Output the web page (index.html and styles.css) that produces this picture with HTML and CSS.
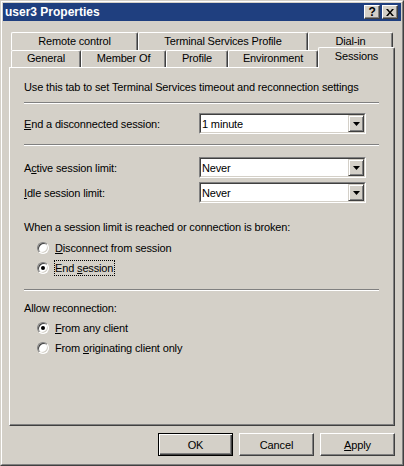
FILE: index.html
```html
<!DOCTYPE html>
<html lang="en">

<head>
    <meta charset="UTF-8">
    <meta name="viewport" content="width=device-width, initial-scale=1.0">
    <title>user3 Properties</title>
    <link rel="stylesheet" href="styles.css">
</head>

<body>
    <div class="window">
        <div class="frame">
            <div class="caption">
                <span class="caption-title">user3 Properties</span>
                <div class="caption-buttons">
                    <span class="caption-btn help">?</span>
                    <span class="caption-btn">
                        <svg width="8" height="7" viewBox="0 0 8 7"><path d="M0 0h2l2 2.4L6 0h2L5 3.5 8 7H6L4 4.6 2 7H0l3-3.5z" fill="#000"/></svg>
                    </span>
                </div>
            </div>

            <div class="content">
                <div class="tabs">
                    <div class="tab-row tab-row-back">
                        <div class="tab tab-remote">Remote control</div>
                        <div class="tab tab-tsprofile">Terminal Services Profile</div>
                        <div class="tab tab-dialin">Dial-in</div>
                    </div>
                    <div class="tab-row tab-row-front">
                        <div class="tab tab-general">General</div>
                        <div class="tab tab-member">Member Of</div>
                        <div class="tab tab-profile">Profile</div>
                        <div class="tab tab-env">Environment</div>
                        <div class="tab tab-sessions selected">Sessions</div>
                    </div>
                </div>

                <div class="panel">
                    <div class="intro">Use this tab to set Terminal Services timeout and reconnection settings</div>
                    <div class="sep sep-1"></div>

                    <div class="field-row row-end">
                        <span class="field-label"><u>E</u>nd a disconnected session:</span>
                        <div class="combo">
                            <div class="combo-inner">
                                <span class="combo-value">1 minute</span>
                                <span class="combo-btn"><svg width="7" height="4" viewBox="0 0 7 4"><path d="M0 0h7L3.5 4z" fill="#000"/></svg></span>
                            </div>
                        </div>
                    </div>

                    <div class="sep sep-2"></div>

                    <div class="field-row row-active">
                        <span class="field-label">A<u>c</u>tive session limit:</span>
                        <div class="combo">
                            <div class="combo-inner">
                                <span class="combo-value">Never</span>
                                <span class="combo-btn"><svg width="7" height="4" viewBox="0 0 7 4"><path d="M0 0h7L3.5 4z" fill="#000"/></svg></span>
                            </div>
                        </div>
                    </div>
                    <div class="field-row row-idle">
                        <span class="field-label"><u>I</u>dle session limit:</span>
                        <div class="combo">
                            <div class="combo-inner">
                                <span class="combo-value">Never</span>
                                <span class="combo-btn"><svg width="7" height="4" viewBox="0 0 7 4"><path d="M0 0h7L3.5 4z" fill="#000"/></svg></span>
                            </div>
                        </div>
                    </div>

                    <div class="group-label group-limit">When a session limit is reached or connection is broken:</div>
                    <div class="radio-group group-limit-options">
                        <div class="radio-row">
                            <span class="radio"></span>
                            <span class="radio-label"><u>D</u>isconnect from session</span>
                        </div>
                        <div class="radio-row">
                            <span class="radio checked"></span>
                            <span class="radio-label focused">End <u>s</u>ession</span>
                        </div>
                    </div>

                    <div class="sep sep-3"></div>

                    <div class="group-label group-reconnect">Allow reconnection:</div>
                    <div class="radio-group group-reconnect-options">
                        <div class="radio-row">
                            <span class="radio checked"></span>
                            <span class="radio-label"><u>F</u>rom any client</span>
                        </div>
                        <div class="radio-row">
                            <span class="radio"></span>
                            <span class="radio-label">From <u>o</u>riginating client only</span>
                        </div>
                    </div>
                </div>

                <div class="actions">
                    <button class="btn btn-default">OK</button>
                    <button class="btn">Cancel</button>
                    <button class="btn"><u>A</u>pply</button>
                </div>
            </div>
        </div>
    </div>
</body>

</html>
```

FILE: styles.css
```css
body {
    margin: 0;
    font-family: "Liberation Sans", Arial, sans-serif;
    font-size: 11px;
    letter-spacing: -0.15px;
    color: #000;
    background-color: #d4d0c8;
}

.window {
    width: 404px;
    height: 466px;
    box-sizing: border-box;
    border: 1px solid;
    border-color: #d4d0c8 #404040 #404040 #d4d0c8;
    background-color: #d4d0c8;
}

.frame {
    height: 100%;
    box-sizing: border-box;
    border: 1px solid;
    border-color: #fff #808080 #808080 #fff;
    padding: 1px;
}

/* title bar */
.caption {
    height: 18px;
    background-color: #1f3f7f;
    color: #fff;
    display: flex;
    align-items: center;
    padding: 0 3px 0 2px;
}

.caption-title {
    font-weight: bold;
    font-size: 12px;
    letter-spacing: 0;
}

.caption-buttons {
    margin-left: auto;
    display: flex;
    gap: 2px;
}

.caption-btn {
    width: 16px;
    height: 14px;
    box-sizing: border-box;
    border: 1px solid;
    border-color: #fff #404040 #404040 #fff;
    box-shadow: inset -1px -1px #808080;
    background-color: #d4d0c8;
    display: flex;
    align-items: center;
    justify-content: center;
    color: #000;
}

.caption-btn.help {
    font-weight: bold;
    font-size: 12px;
    line-height: 12px;
}

.content {
    padding: 11px 6px 0;
}

/* tabs */
.tabs {
    padding-left: 2px;
}

.tab-row {
    display: flex;
}

.tab {
    box-sizing: border-box;
    border: 1px solid;
    border-bottom: none;
    border-color: #fff #404040 #fff #fff;
    box-shadow: inset -1px 0 #808080;
    border-radius: 2px 2px 0 0;
    background-color: #d4d0c8;
    text-align: center;
    white-space: nowrap;
}

.tab-row-back .tab {
    height: 18px;
    line-height: 16px;
}

.tab-row-front .tab {
    height: 17px;
    line-height: 15px;
}

.tab-row-front .tab.selected {
    position: relative;
    z-index: 2;
    height: 21px;
    margin-top: -3px;
    margin-bottom: -1px;
    line-height: 17px;
}

.tab-remote { width: 127px; }
.tab-tsprofile { width: 170px; }
.tab-dialin { width: 85px; }
.tab-general { width: 70px; }
.tab-member { width: 85px; }
.tab-profile { width: 62px; }
.tab-env { width: 90px; }
.tab-sessions { width: 77px; }

/* property page */
.panel {
    height: 359px;
    box-sizing: border-box;
    border: 1px solid;
    border-color: #fff #404040 #404040 #fff;
    box-shadow: inset -1px -1px #808080;
    padding: 13px 15px 0 14px;
}

.intro {
    line-height: 13px;
}

.sep {
    height: 0;
    border-top: 1px solid #808080;
    border-bottom: 1px solid #fff;
}

.sep-1 { margin-top: 8px; }
.sep-2 { margin-top: 10px; }
.sep-3 { margin-top: 11px; }

.field-row {
    display: flex;
    align-items: center;
    height: 21px;
}

.row-end { margin-top: 9px; }
.row-active { margin-top: 11px; }
.row-idle { margin-top: 4px; }

.field-label {
    width: 175px;
}

.combo {
    width: 167px;
    height: 21px;
    box-sizing: border-box;
    border: 1px solid;
    border-color: #808080 #fff #fff #808080;
}

.combo-inner {
    height: 100%;
    box-sizing: border-box;
    border: 1px solid;
    border-color: #404040 #d4d0c8 #d4d0c8 #404040;
    background-color: #fff;
    display: flex;
    align-items: center;
}

.combo-value {
    flex: 1;
    padding-left: 1px;
}

.combo-btn {
    width: 16px;
    height: 17px;
    box-sizing: border-box;
    border: 1px solid;
    border-color: #d4d0c8 #404040 #404040 #d4d0c8;
    box-shadow: inset 1px 1px #fff, inset -1px -1px #808080;
    background-color: #d4d0c8;
    display: flex;
    align-items: center;
    justify-content: center;
}

.group-label {
    line-height: 13px;
}

.group-limit { margin-top: 18px; }
.group-reconnect { margin-top: 11px; }
.group-limit-options { margin-top: 4px; }
.group-reconnect-options { margin-top: 3px; }

.radio-row {
    display: flex;
    align-items: center;
    height: 20px;
    padding-left: 13px;
}

.radio {
    position: relative;
    width: 12px;
    height: 12px;
    box-sizing: border-box;
    border-radius: 50%;
    border: 1px solid;
    border-color: #808080 #fff #fff #808080;
    background-color: #fff;
    box-shadow: inset 1px 1px #404040, inset -1px -1px #d4d0c8;
    margin-right: 5px;
}

.radio.checked::after {
    content: "";
    position: absolute;
    left: 3px;
    top: 3px;
    width: 4px;
    height: 4px;
    border-radius: 50%;
    background-color: #000;
}

.radio-label {
    border: 1px solid transparent;
    line-height: 14px;
    padding-right: 1px;
}

.radio-label.focused {
    border: 1px dotted #000;
}

/* dialog buttons */
.actions {
    display: flex;
    justify-content: flex-end;
    gap: 6px;
    margin-top: 7px;
}

.btn {
    width: 75px;
    height: 23px;
    box-sizing: border-box;
    border: 1px solid;
    border-color: #fff #404040 #404040 #fff;
    box-shadow: inset -1px -1px #808080;
    background-color: #d4d0c8;
    font-family: inherit;
    font-size: 11px;
    letter-spacing: -0.15px;
    color: #000;
    padding: 0;
}

.btn-default {
    border-color: #000;
    box-shadow: inset 1px 1px #fff, inset -1px -1px #404040, inset -2px -2px #808080;
}
```
